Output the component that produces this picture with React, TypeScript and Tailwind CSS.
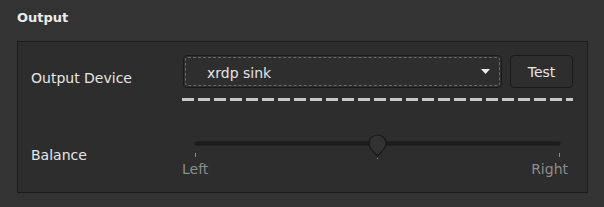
import React from 'react';

const font = "font-['DejaVu_Sans',sans-serif]";

const ComboBox: React.FC<{ value: string }> = ({ value }) => (
  <div className="ml-[1px] h-[33px] w-[319px] rounded-[4px] border border-[#1a1a1a] bg-[#2e2e2e] p-[1px]">
    <div className="flex h-full items-center justify-between rounded-[3px] border border-dashed border-[#6a6a6a] pl-[21px] pr-[9px]">
      <span className="pt-[2px] text-[14px] leading-5 text-[#e4e4e4]">{value}</span>
      <svg width="9" height="5" viewBox="0 0 9 5">
        <path d="M0 0 L9 0 L4.5 5 Z" fill="#f0f0f0" />
      </svg>
    </div>
  </div>
);

const BalanceSlider: React.FC<{ value: number }> = ({ value }) => {
  // groove runs from x=13 to x=378 inside the svg
  const hx = 13 + (378 - 13) * value;
  const r = 8.5;
  const cy = 10.5;
  const tip = 23;
  return (
    <div className="w-[390px]">
      <svg width="390" height="26" viewBox="0 0 390 26" className="block">
        <rect x="13" y="9" width="365" height="3" rx="1.5" fill="#1e1e1e" stroke="#181818" strokeWidth="1" />
        <line x1="13.5" y1="20" x2="13.5" y2="24" stroke="#8a8a8a" strokeWidth="1" />
        <line x1="377.5" y1="20" x2="377.5" y2="24" stroke="#8a8a8a" strokeWidth="1" />
        <rect x={hx - 0.5} y="25" width="1" height="1" fill="#8a8a8a" />
        <path
          d={`M${hx} ${tip} L${hx - 6.2} ${cy + 5.8} A${r} ${r} 0 1 1 ${hx + 6.2} ${cy + 5.8} Z`}
          fill="#323232"
          stroke="#191919"
          strokeWidth="1.2"
        />
      </svg>
      <div className="flex justify-between pr-[4px] text-[14px] leading-5 text-[#8c8c8c]">
        <span>Left</span>
        <span>Right</span>
      </div>
    </div>
  );
};

export default function App() {
  return (
    <div className={`${font} h-[207px] w-[604px] overflow-hidden bg-[#333333] pl-[17px] pt-[10px]`}>
      <div className="text-[13px] font-bold leading-4 text-[#ececec]">Output</div>

      <div className="mt-[15px] h-[152px] w-[571px] border border-[#1c1c1c] bg-[#2d2d2d] pl-[13px] pt-[13px]">
        {/* Output device row */}
        <div className="flex items-start">
          <div className="mt-[13px] w-[151px] text-[14px] leading-5 text-[#e6e6e6]">Output Device</div>
          <div className="flex w-[391px] flex-col">
            <div className="flex gap-[8px]">
              <ComboBox value="xrdp sink" />
              <button className="h-[33px] w-[63px] rounded-[4px] border border-[#1a1a1a] bg-[#2e2e2e] pt-[1px] text-[14px] leading-5 text-[#e6e6e6]">
                Test
              </button>
            </div>
            <div className="mt-[10px] h-[3px] w-[391px] bg-[repeating-linear-gradient(90deg,#c8c8c8_0px,#c8c8c8_12px,transparent_12px,transparent_16px)]" />
          </div>
        </div>

        {/* Balance row */}
        <div className="mt-[32px] flex items-start">
          <div className="mt-[12px] w-[151px] text-[14px] leading-5 text-[#e6e6e6]">Balance</div>
          <BalanceSlider value={0.5} />
        </div>
      </div>
    </div>
  );
}
